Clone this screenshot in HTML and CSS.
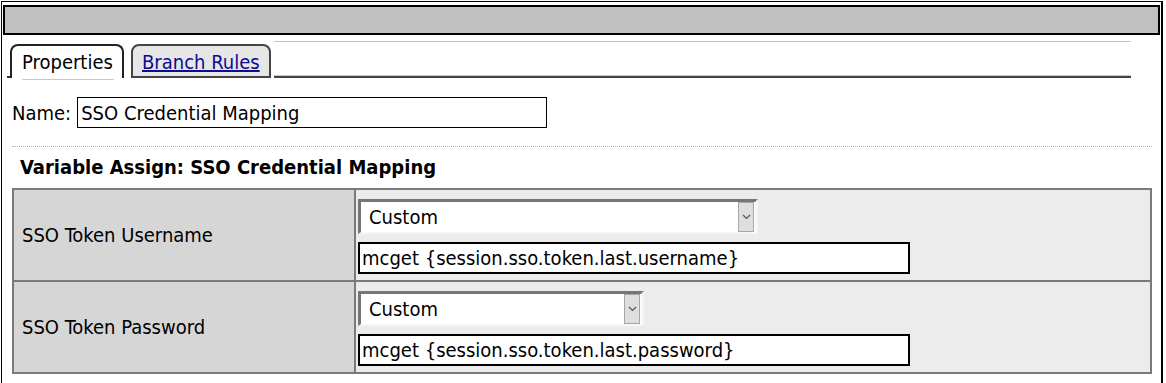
FILE: index.html
```html
<!DOCTYPE html>
<html lang="en">
<head>
    <meta charset="UTF-8">
    <title>Variable Assign</title>
    <link rel="stylesheet" href="styles.css">
</head>
<body>
    <div class="frame">
        <div class="title-bar"></div>

        <!-- Tabs -->
        <div class="tabs">
            <span class="tab-edge"></span>
            <div class="tab tab-active">Properties</div>
            <div class="tab tab-inactive"><a href="#">Branch Rules</a></div>
            <span class="tab-fill"></span>
        </div>

        <div class="name-row">
            <label for="itemName">Name:</label>
            <input type="text" id="itemName" class="name-input" value="SSO Credential Mapping">
        </div>

        <div class="section">
            <h3>Variable Assign: SSO Credential Mapping</h3>
            <table class="assign-table">
                <tr>
                    <td class="label-cell">SSO Token Username</td>
                    <td class="value-cell">
                        <div class="select select-wide">
                            <select><option>Custom</option></select>
                            <span class="select-arrow"><svg width="9" height="6" viewBox="0 0 9 6"><path d="M1 1 L4.5 4.5 L8 1" fill="none" stroke="#555" stroke-width="1.2"/></svg></span>
                        </div>
                        <input type="text" class="expr-input" value="mcget {session.sso.token.last.username}">
                    </td>
                </tr>
                <tr>
                    <td class="label-cell">SSO Token Password</td>
                    <td class="value-cell">
                        <div class="select select-narrow">
                            <select><option>Custom</option></select>
                            <span class="select-arrow"><svg width="9" height="6" viewBox="0 0 9 6"><path d="M1 1 L4.5 4.5 L8 1" fill="none" stroke="#555" stroke-width="1.2"/></svg></span>
                        </div>
                        <input type="text" class="expr-input" value="mcget {session.sso.token.last.password}">
                    </td>
                </tr>
            </table>
        </div>
    </div>
</body>
</html>
```
FILE: styles.css
```css
/* Base styles */
body {
    margin: 0;
    background-color: #fff;
    font-family: "DejaVu Sans Condensed", "DejaVu Sans", sans-serif;
    font-size: 20px;
    color: #000;
}

.frame {
    margin: 1px 0 0 1px;
    width: 1162px;
    height: 400px;
    border-left: 1px solid #000;
    border-top: 1px solid #000;
    border-right: 2px solid #000;
    box-sizing: border-box;
    padding: 3px 0 0 1px;
}

.title-bar {
    width: 1157px;
    height: 30px;
    background-color: #c0c0c0;
    border: 2px solid #000;
    box-sizing: border-box;
}

/* Tab styles */
.tabs {
    display: flex;
    align-items: flex-end;
    margin: 6px 0 0 4px;
    width: 1124px;
    height: 37px;
}

.tab-edge {
    width: 3px;
    height: 2px;
    background-color: #333;
    align-self: flex-end;
}

.tab {
    height: 34px;
    box-sizing: border-box;
    padding: 3px 6px 0 10px;
    border: 2px solid #333;
    border-bottom: none;
    border-radius: 8px 8px 0 0;
    line-height: 26px;
    white-space: nowrap;
}

.tab-active {
    background-color: #fff;
    border-color: #222;
    width: 114px;
    position: relative;
}

.tab-active::after {
    content: "";
    position: absolute;
    left: 10px;
    right: 8px;
    bottom: -2px;
    height: 1px;
    background-color: #c8c8c8;
}

.tab-inactive {
    background-color: #e6e6e6;
    margin-left: 7px;
    border-bottom: 2px solid #444;
    border-color: #444;
    padding-left: 9px;
    width: 140px;
}

.tab-inactive a {
    color: #0b0b8f;
    text-decoration: underline;
}

.tab-fill {
    flex: 1;
    align-self: stretch;
    margin-left: 3px;
    border-top: 1px solid #c4c4c4;
    border-bottom: 2px solid #444;
    box-shadow: inset 0 -1px 0 #c8c8c8;
}

/* Name row */
.name-row {
    display: flex;
    align-items: center;
    margin: 19px 0 0 9px;
}

.name-row label {
    margin-right: 6px;
}

.name-input {
    width: 470px;
    height: 31px;
    box-sizing: border-box;
    padding: 0 3px;
    border: 1px solid #000;
    font-family: inherit;
    font-size: 20px;
}

/* Variable assign section */
.section {
    margin: 18px 0 0 9px;
    width: 1140px;
    border-top: 1px dotted #b0b0b0;
}

h3 {
    margin: 8px 0 9px 8px;
    font-size: 20px;
    line-height: 24px;
}

.assign-table {
    width: 1140px;
    border-collapse: collapse;
    border: 2px solid #7a7a7a;
}

.assign-table td {
    border: 2px solid #7a7a7a;
    height: 92px;
    box-sizing: border-box;
}

.label-cell {
    width: 342px;
    background-color: #d6d6d6;
    padding: 0 8px;
}

.value-cell {
    background-color: #ececec;
    padding: 2px 0 0 2px;
}

.select {
    position: relative;
    height: 35px;
    box-sizing: border-box;
    border-top: 3px solid #767676;
    border-left: 3px solid #767676;
    border-right: 3px solid #f6f6f6;
    border-bottom: 2px solid #f6f6f6;
    background-color: #fff;
    margin-bottom: 8px;
}

.select-wide {
    width: 400px;
}

.select-narrow {
    width: 286px;
}

.select select {
    appearance: none;
    -webkit-appearance: none;
    width: 100%;
    height: 100%;
    border: none;
    background: transparent;
    padding: 0 0 0 8px;
    font-family: inherit;
    font-size: 20px;
    color: #000;
}

.select-arrow {
    position: absolute;
    top: 0;
    right: 1px;
    width: 16px;
    height: 30px;
    box-sizing: border-box;
    background-color: #dedede;
    border: 1px solid #a6a6a6;
    display: flex;
    align-items: center;
    justify-content: center;
}

.expr-input {
    display: block;
    width: 552px;
    height: 32px;
    box-sizing: border-box;
    padding: 0 2px;
    border: 2px solid #000;
    background-color: #fff;
    font-family: inherit;
    font-size: 20px;
}
```
